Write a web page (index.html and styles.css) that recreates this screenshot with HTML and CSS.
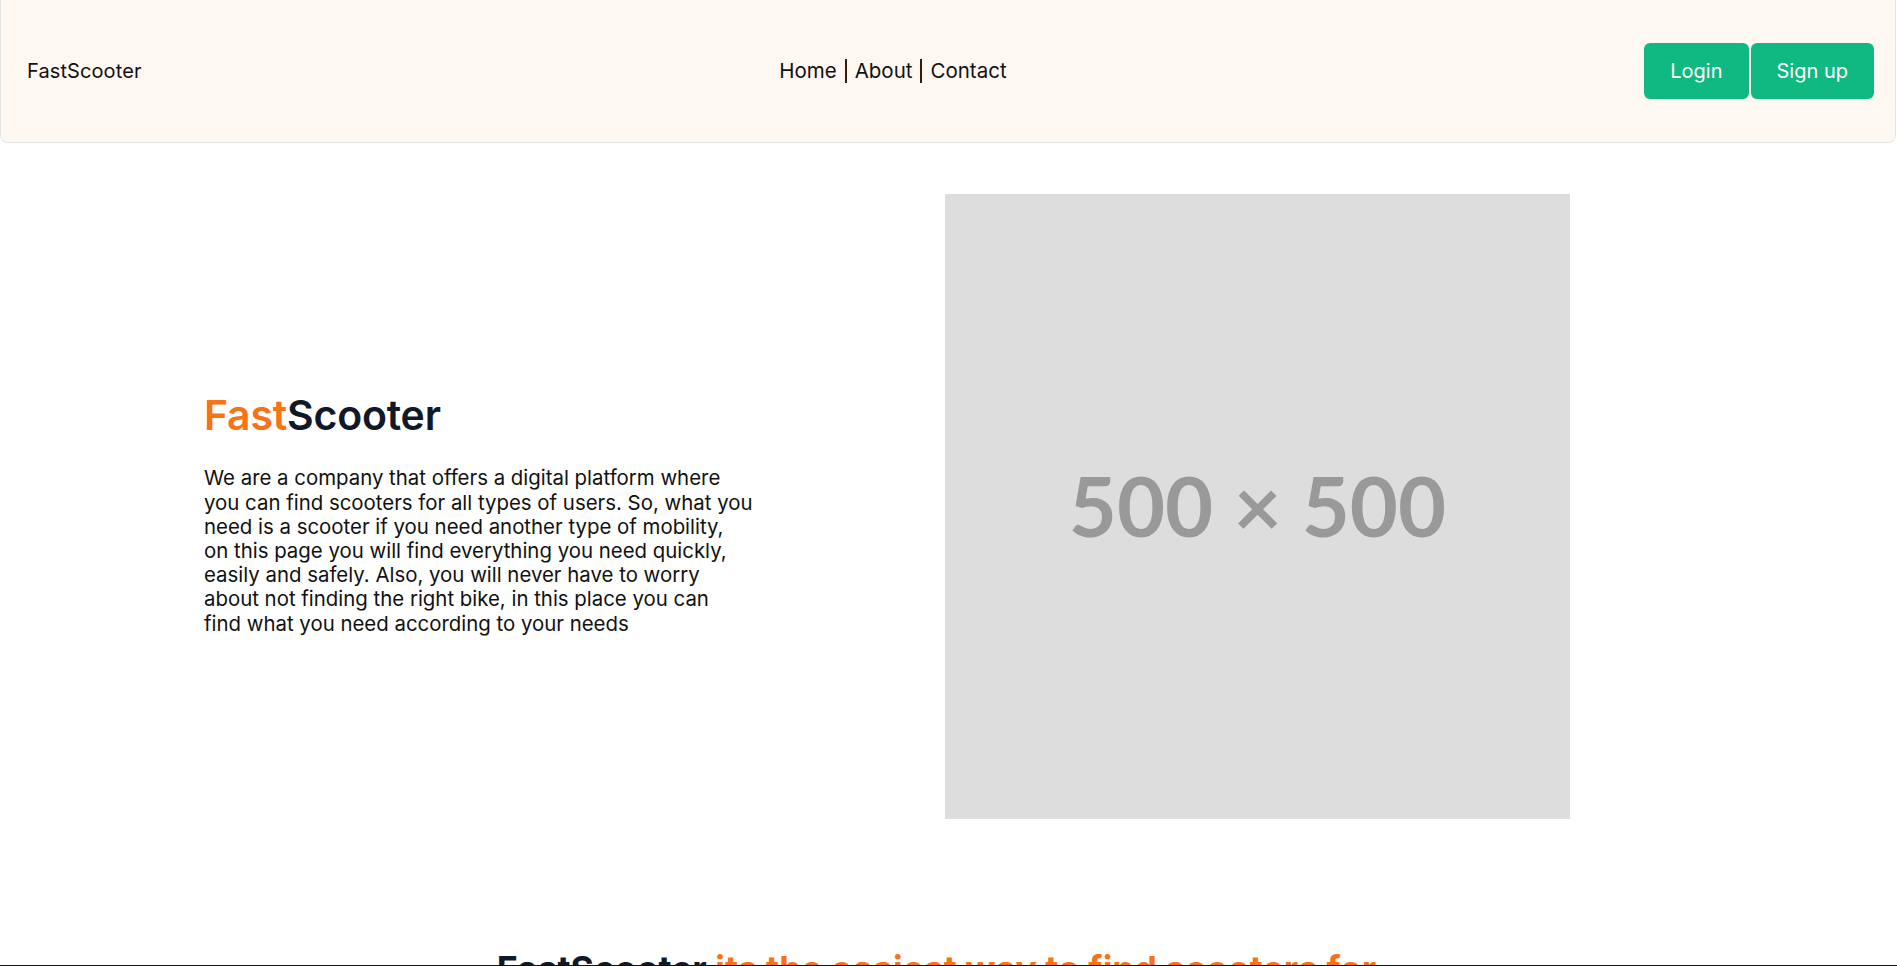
FILE: index.html
```html
<!DOCTYPE html>
<html lang="en">
<head>
<meta charset="utf-8">
<title>FastScooter</title>
<link rel="stylesheet" href="styles.css">
</head>
<body>
<header class="header">
  <div class="logo">FastScooter</div>
  <nav class="nav">
    <a class="nav-link" href="#">Home</a><a class="nav-link nav-mid" href="#">About</a><a class="nav-link" href="#">Contact</a>
  </nav>
  <div class="actions">
    <button class="btn">Login</button>
    <button class="btn">Sign up</button>
  </div>
</header>
<main>
  <section class="hero">
    <div class="hero-text">
      <h1 class="hero-title"><span class="accent">Fast</span>Scooter</h1>
      <p class="hero-desc">We are a company that offers a digital platform where<br>you can find scooters for all types of users. So, what you<br>need is a scooter if you need another type of mobility,<br>on this page you will find everything you need quickly,<br>easily and safely. Also, you will never have to worry<br>about not finding the right bike, in this place you can<br>find what you need according to your needs</p>
    </div>
    <div class="placeholder">500 × 500</div>
  </section>
  <section class="second">
    <h2 class="second-title">FastScooter <span class="accent">its the easiest way to find scooters for everyone</span></h2>
  </section>
</main>
<div class="bottom-line"></div>
</body>
</html>
```
FILE: styles.css
```css
* { box-sizing: border-box; }
html, body { margin: 0; padding: 0; }
body {
  font-family: Inter, "Noto Sans", sans-serif;
  color: #111827;
  background: #fff;
  overflow: hidden;
}
.header {
  height: 143px;
  width: 1896px;
  background: #fff7f2;
  border: 1px solid #e5e5e5;
  border-top: none;
  border-radius: 0 0 8px 8px;
  display: flex;
  align-items: center;
  justify-content: space-between;
  padding: 0 21px 0 26px;
}
.logo {
  font-size: 20px;
  color: #111;
  letter-spacing: 0.1px;
}
.nav { display: flex; align-items: center; font-size: 20.5px; }
.nav-link { color: #111; text-decoration: none; line-height: 24px; }
.nav-mid {
  border-left: 2px solid #3a1a08;
  border-right: 2px solid #3a1a08;
  padding: 0 8px;
  margin: 0 8px;
}
.actions { display: flex; gap: 2px; }
.btn {
  height: 56px;
  padding: 0 26px;
  border: none;
  border-radius: 6px;
  background: #10b981;
  color: #fff;
  font-family: Inter, sans-serif;
  font-size: 20px;
}
.hero {
  display: flex;
  align-items: center;
  padding: 51px 0 0 204px;
}
.hero-text { width: 741px; padding-top: 14px; }
.hero-title {
  margin: 0 0 26px 0;
  font-size: 41px;
  font-weight: 600;
  line-height: 1.2;
  color: #111827;
  letter-spacing: -0.2px;
}
.accent { color: #f97316; }
.hero-desc {
  margin: 0;
  width: 580px;
  font-size: 20.4px;
  line-height: 24.2px;
  color: #111;
}
.placeholder {
  width: 625px;
  height: 625px;
  background: #dddddd;
  color: #999999;
  font-family: Lato, sans-serif;
  font-size: 83px;
  font-weight: 700;
  display: flex;
  align-items: center;
  justify-content: center;
  padding-bottom: 4px;
}
.second { padding: 130px 24px 0 0; text-align: center; }
.second-title {
  margin: 0 auto;
  width: 960px;
  font-size: 35.6px;
  font-weight: 700;
  line-height: 1.2;
}
.bottom-line {
  position: fixed;
  left: 0;
  right: 0;
  bottom: 0;
  height: 1px;
  background: #111;
}
```
